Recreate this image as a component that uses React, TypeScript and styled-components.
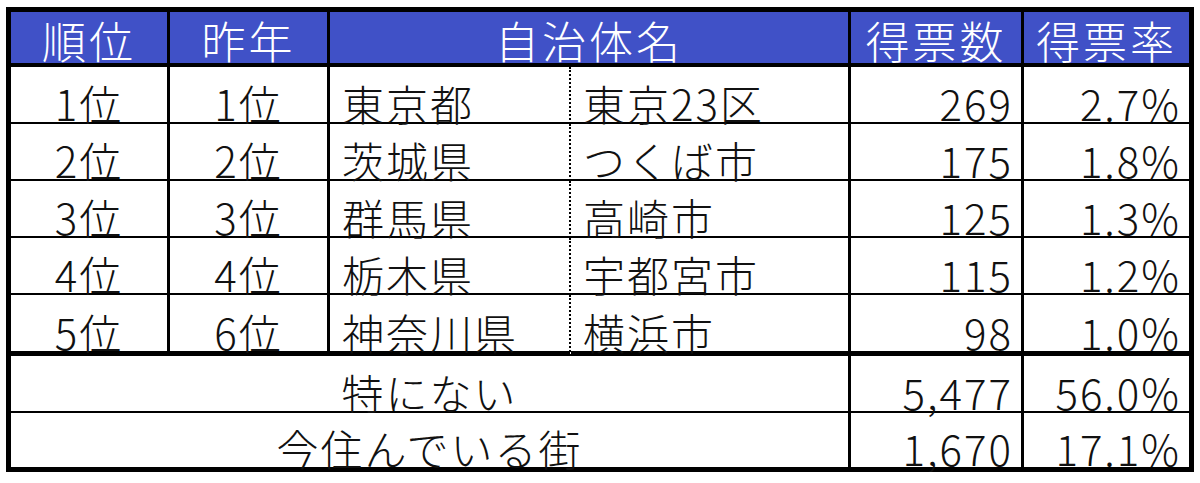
import React from "react";
import styled, { createGlobalStyle } from "styled-components";

const Global = createGlobalStyle`
  html, body { margin: 0; padding: 0; background: #ffffff; }
  body { font-family: "Noto Sans CJK JP", "Noto Sans", sans-serif; }
`;

const Page = styled.div`
  padding: 7px 0 0 6px;
`;

const Table = styled.table`
  width: 1188px;
  table-layout: fixed;
  border-collapse: separate;
  border-spacing: 0;
  border: 5px solid #000;
  font-family: "Noto Sans CJK JP", "Noto Sans", sans-serif;
  color: #111;
`;

const HeadRow = styled.tr`
  height: 55px;
`;

const HeadCell = styled.th<{ $last?: boolean }>`
  background: #4051c7;
  color: #ffffff;
  font-weight: 300;
  font-size: 44px;
  letter-spacing: 3px;
  line-height: 1;
  padding: 0 0 1px 0;
  text-align: center;
  vertical-align: bottom;
  border-bottom: 4px solid #000;
  border-right: ${(p) => (p.$last ? "none" : "3px solid #000")};
  white-space: nowrap;
`;

const BodyRow = styled.tr<{ $h: number }>`
  height: ${(p) => p.$h}px;
`;

type Align = "left" | "center" | "right";
type Line = "thin" | "thick" | "none";

const Cell = styled.td<{
  $align: Align;
  $bottom: Line;
  $right: "solid" | "dotted" | "none";
}>`
  font-size: 42px;
  font-weight: 300;
  letter-spacing: 2px;
  line-height: 0.9;
  white-space: nowrap;
  vertical-align: bottom;
  text-align: ${(p) => p.$align};
  padding: 0 ${(p) => (p.$align === "right" ? "8px" : "0")} 0
    ${(p) => (p.$align === "left" ? "12px" : "0")};
  border-bottom: ${(p) =>
    p.$bottom === "thick"
      ? "5px solid #000"
      : p.$bottom === "thin"
      ? "2px solid #000"
      : "none"};
  border-right: ${(p) =>
    p.$right === "solid"
      ? "3px solid #000"
      : p.$right === "dotted"
      ? "2px dotted #000"
      : "none"};
`;

const rows = [
  ["1位", "1位", "東京都", "東京23区", "269", "2.7%"],
  ["2位", "2位", "茨城県", "つくば市", "175", "1.8%"],
  ["3位", "3位", "群馬県", "高崎市", "125", "1.3%"],
  ["4位", "4位", "栃木県", "宇都宮市", "115", "1.2%"],
  ["5位", "6位", "神奈川県", "横浜市", "98", "1.0%"],
];

const totals = [
  ["特にない", "5,477", "56.0%"],
  ["今住んでいる街", "1,670", "17.1%"],
];

export default function App() {
  return (
    <>
      <Global />
      <Page>
        <Table>
          <colgroup>
            <col style={{ width: 159 }} />
            <col style={{ width: 160 }} />
            <col style={{ width: 241 }} />
            <col style={{ width: 280 }} />
            <col style={{ width: 173 }} />
            <col />
          </colgroup>
          <thead>
            <HeadRow>
              <HeadCell>順位</HeadCell>
              <HeadCell>昨年</HeadCell>
              <HeadCell colSpan={2}>自治体名</HeadCell>
              <HeadCell>得票数</HeadCell>
              <HeadCell $last>得票率</HeadCell>
            </HeadRow>
          </thead>
          <tbody>
            {rows.map((r, i) => {
              const last = i === rows.length - 1;
              const b: Line = last ? "thick" : "thin";
              return (
                <BodyRow key={i} $h={last ? 61 : 57}>
                  <Cell $align="center" $bottom={b} $right="solid">{r[0]}</Cell>
                  <Cell $align="center" $bottom={b} $right="solid">{r[1]}</Cell>
                  <Cell $align="left" $bottom={b} $right="dotted">{r[2]}</Cell>
                  <Cell $align="left" $bottom={b} $right="solid">{r[3]}</Cell>
                  <Cell $align="right" $bottom={b} $right="solid">{r[4]}</Cell>
                  <Cell $align="right" $bottom={b} $right="none">{r[5]}</Cell>
                </BodyRow>
              );
            })}
            {totals.map((t, i) => {
              const last = i === totals.length - 1;
              const b: Line = last ? "none" : "thin";
              return (
                <BodyRow key={"t" + i} $h={last ? 54 : 57}>
                  <Cell colSpan={4} $align="center" $bottom={b} $right="solid">{t[0]}</Cell>
                  <Cell $align="right" $bottom={b} $right="solid">{t[1]}</Cell>
                  <Cell $align="right" $bottom={b} $right="none">{t[2]}</Cell>
                </BodyRow>
              );
            })}
          </tbody>
        </Table>
      </Page>
    </>
  );
}
